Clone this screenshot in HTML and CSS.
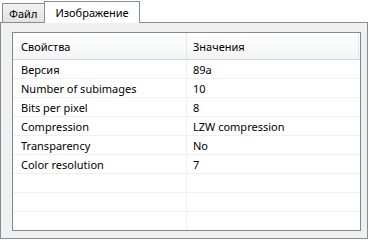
FILE: index.html
```html
<!DOCTYPE html>
<html lang="ru">
<head>
    <meta charset="UTF-8">
    <title>Изображение</title>
    <link rel="stylesheet" href="styles.css">
</head>
<body>
    <div class="tabs">
        <div class="tab">Файл</div>
        <div class="tab active">Изображение</div>
    </div>
    <div class="pane">
        <div class="list">
            <div class="row head">
                <div class="cell">Свойства</div>
                <div class="cell">Значения</div>
            </div>
            <div class="row"><div class="cell">Версия</div><div class="cell">89a</div></div>
            <div class="row"><div class="cell">Number of subimages</div><div class="cell">10</div></div>
            <div class="row"><div class="cell">Bits per pixel</div><div class="cell">8</div></div>
            <div class="row"><div class="cell">Compression</div><div class="cell">LZW compression</div></div>
            <div class="row"><div class="cell">Transparency</div><div class="cell">No</div></div>
            <div class="row"><div class="cell">Color resolution</div><div class="cell">7</div></div>
            <div class="row"><div class="cell"></div><div class="cell"></div></div>
            <div class="row"><div class="cell"></div><div class="cell"></div></div>
            <div class="row filler"><div class="cell"></div><div class="cell"></div></div>
        </div>
    </div>
</body>
</html>
```

FILE: styles.css
```css
body {
    margin: 0;
    background: #fff;
    font-family: "Noto Sans", sans-serif;
    font-size: 11px;
    color: #000;
    width: 371px;
    height: 240px;
    overflow: hidden;
}
.tabs {
    display: flex;
    align-items: flex-end;
    height: 22px;
    padding-left: 2px;
    position: relative;
    z-index: 1;
}
.tab {
    height: 19px;
    box-sizing: border-box;
    border: 1px solid #898c95;
    border-bottom: none;
    background: linear-gradient(#f2f2f2, #e3e3e3);
    padding: 0 7px 0 6px;
    line-height: 19px;
}
.tab.active {
    height: 22px;
    margin-bottom: -1px;
    margin-left: -1px;
    background: #fff;
    padding: 0 10px;
    line-height: 21px;
}
.pane {
    width: 368px;
    height: 217px;
    box-sizing: border-box;
    border: 1px solid #898c95;
    background: #f0f0f0;
    padding: 9px 6px 7px 11px;
    display: flex;
}
.list {
    flex: 1;
    border: 1px solid #828790;
    background: #fff;
    display: flex;
    flex-direction: column;
}
.row {
    display: flex;
    height: 19px;
    box-sizing: border-box;
    border-bottom: 1px solid #f0f0f0;
    line-height: 19px;
}
.row .cell:first-child {
    width: 174px;
    box-sizing: border-box;
    padding-left: 8px;
    border-right: 1px solid #f0f0f0;
}
.row .cell:last-child {
    flex: 1;
    padding-left: 6px;
}
.head {
    height: 27px;
    line-height: 27px;
    background: linear-gradient(#ffffff, #f3f4f6);
    border-bottom: 1px solid #d5d5d5;
}
.head .cell:first-child {
    border-right: 1px solid #e3e8ee;
}
.head .cell:last-child {
    border-right: 1px solid #e3e8ee;
    margin-right: 1px;
}
.filler {
    flex: 1;
    border-bottom: none;
}
```
